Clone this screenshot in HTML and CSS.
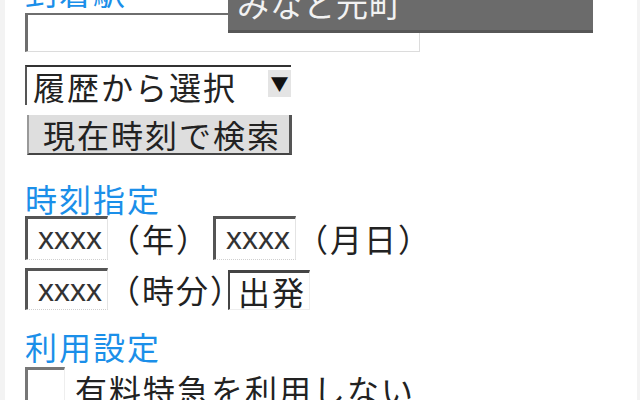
FILE: index.html
```html
<!DOCTYPE html>
<html lang="ja">
<head>
<meta charset="utf-8">
<title>到着駅</title>
<link rel="stylesheet" href="styles.css">
</head>
<body>
<div class="page">
  <div class="label top-label">到着駅</div>
  <div class="field-wide"></div>
  <div class="select-hist"><span class="select-text">履歴から選択</span><span class="select-arrow">▼</span></div>
  <div class="btn">現在時刻で検索</div>

  <div class="label sec-label">時刻指定</div>
  <div class="row row1">
    <span class="box">xxxx</span><span class="unit unit-y">（年）</span><span class="box">xxxx</span><span class="unit">（月日）</span>
  </div>
  <div class="row row2">
    <span class="box">xxxx</span><span class="unit unit-hm">（時分）</span><span class="dep">出発</span>
  </div>

  <div class="label sec-label2">利用設定</div>
  <div class="row check-row">
    <span class="check"></span><span class="check-text">有料特急を利用しない</span>
  </div>

  <div class="popup">みなと元町</div>
</div>
</body>
</html>
```

FILE: styles.css
```css
html, body {
  margin: 0;
  padding: 0;
}
body {
  background: #f3f3f3;
  font-family: "Noto Sans CJK JP", "Noto Sans", sans-serif;
  color: #222;
}
.page {
  position: relative;
  margin: 0 3px 0 5px;
  height: 400px;
  overflow: hidden;
  background: #fff;
  padding-left: 20px;
}
.label {
  color: #1b8fe9;
  font-size: 32px;
  letter-spacing: 2px;
  line-height: 36px;
  height: 36px;
}
.top-label {
  margin-top: -27px;
}
.field-wide {
  margin-top: 4px;
  box-sizing: border-box;
  width: 395px;
  height: 39px;
  border-top: 2px solid #6e6e6e;
  border-left: 3px solid #6e6e6e;
  border-right: 1px solid #dcdcdc;
  border-bottom: 1px solid #dcdcdc;
}
.select-hist {
  margin-top: 13px;
  box-sizing: border-box;
  width: 266px;
  height: 40px;
  border-top: 2px solid #333;
  border-left: 2px solid #555;
  display: flex;
  align-items: stretch;
  justify-content: space-between;
}
.select-text {
  font-size: 32px;
  letter-spacing: 2px;
  line-height: 38px;
  padding-left: 6px;
  color: #222;
}
.select-arrow {
  width: 23px;
  margin: 3px 0 8px;
  background: #e4e4e4;
  font-size: 18px;
  line-height: 27px;
  text-align: center;
  color: #111;
}
.btn {
  margin: 10px 0 0 2px;
  box-sizing: border-box;
  width: 265px;
  height: 40px;
  background: #dedede;
  border-left: 2px solid #999;
  border-right: 3px solid #555;
  border-bottom: 2px solid #444;
  font-size: 32px;
  letter-spacing: 2px;
  line-height: 38px;
  padding-left: 14px;
  color: #222;
}
.sec-label {
  margin-top: 25px;
}
.row {
  display: flex;
  align-items: stretch;
  font-size: 32px;
  letter-spacing: 2px;
  white-space: nowrap;
}
.row1 {
  height: 44px;
}
.row2 {
  margin-top: 8px;
  height: 42px;
}
.box {
  box-sizing: border-box;
  width: 83px;
  border-top: 3px solid #555;
  border-left: 3px solid #555;
  border-right: 1px solid #e4e4e4;
  border-bottom: 1px dotted #cfcfcf;
  font-family: "Liberation Sans", Arial, sans-serif;
  font-size: 32px;
  letter-spacing: 0;
  line-height: 38px;
  padding-left: 10px;
  color: #333;
}
.unit {
  line-height: 44px;
  color: #222;
}
.row2 .unit {
  line-height: 42px;
}
.unit-y {
  width: 105px;
}
.unit-hm {
  width: 120px;
}
.dep {
  box-sizing: border-box;
  width: 82px;
  margin-top: 2px;
  border-top: 3px solid #444;
  border-left: 2px solid #444;
  border-right: 1px solid #eee;
  border-bottom: 1px solid #eee;
  line-height: 36px;
  padding-left: 8px;
  color: #222;
}
.sec-label2 {
  margin-top: 18px;
}
.check-row {
  margin-top: 3px;
  height: 40px;
}
.check {
  box-sizing: border-box;
  width: 40px;
  height: 40px;
  border-top: 3px solid #777;
  border-left: 3px solid #777;
  border-right: 1px solid #eee;
}
.check-text {
  margin-left: 10px;
  line-height: 44px;
  color: #222;
}
.popup {
  position: absolute;
  left: 223px;
  top: -20px;
  box-sizing: border-box;
  width: 365px;
  height: 53px;
  background: #6b6b6b;
  border-bottom: 3px solid #575757;
  color: #f2f2f2;
  font-size: 32px;
  letter-spacing: 1px;
  line-height: 46px;
  padding-left: 9px;
}
```
